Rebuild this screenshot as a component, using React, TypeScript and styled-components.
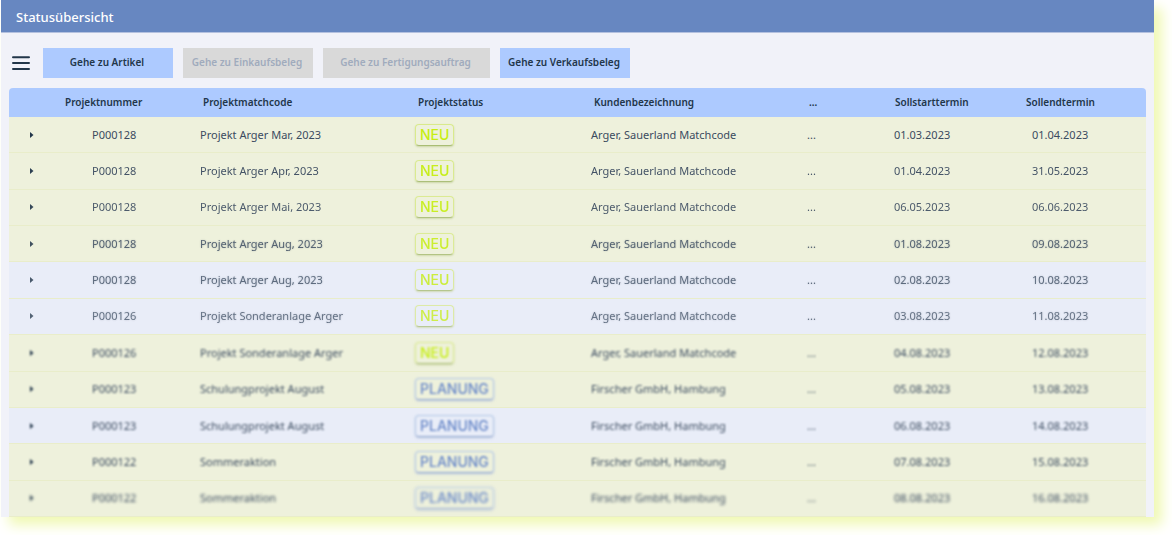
import React from 'react';
import styled, { createGlobalStyle } from 'styled-components';

const GlobalStyle = createGlobalStyle`
  * { box-sizing: border-box; }
  body {
    margin: 0;
    background: #ffffff;
    font-family: "Noto Sans", "Open Sans", sans-serif;
    color: #22364a;
  }
`;

const Page = styled.div`
  min-height: 100vh;
  padding: 0 18px 18px 1px;
  background: #ffffff;
`;

const Panel = styled.main`
  background: #f1f2f9;
  box-shadow: 8px 8px 12px #f0f9b4;
`;

const TitleBar = styled.header`
  display: flex;
  align-items: center;
  height: 33px;
  padding: 1px 15px 0;
  background: #6787c1;
  border-bottom: 1px solid #b4c1df;
`;

const Title = styled.h1`
  margin: 0;
  font-size: 13px;
  line-height: 18px;
  font-weight: 500;
  color: #ffffff;
`;

const Toolbar = styled.nav`
  display: flex;
  align-items: center;
  gap: 10px;
  padding: 15px 10px 10px;
`;

const MenuButton = styled.button`
  display: flex;
  margin-right: 2px;
  padding: 0;
  border: 0;
  background: none;
  color: #22364a;
`;

const ActionButton = styled.button<{ $wide?: boolean }>`
  width: ${({ $wide }) => ($wide ? 167 : 130)}px;
  height: 30px;
  padding: 0 2px 2px 0;
  border: 0;
  background: #adcaff;
  color: #22364a;
  font-family: inherit;
  font-size: 10px;
  line-height: 16px;
  font-weight: 600;
  white-space: nowrap;
  &:disabled {
    background: #d9d9d9;
    color: #a0abbd;
  }
`;

const TableArea = styled.section`
  padding: 0 8px;
`;

const Table = styled.table`
  width: 100%;
  height: 429px;
  table-layout: fixed;
  border-collapse: separate;
  border-spacing: 0;
  font-size: 11px;
  line-height: 16px;
`;

const HeadCell = styled.th<{ $indent?: number }>`
  height: 29px;
  padding: 0 0 2px ${({ $indent = 0 }) => $indent}px;
  background: #adcaff;
  text-align: left;
  font-size: 10px;
  font-weight: 600;
  white-space: nowrap;
  &:first-child { border-top-left-radius: 4px; }
  &:last-child { border-top-right-radius: 4px; }
`;

const Row = styled.tr<{ $blue: boolean }>`
  background: ${({ $blue }) => ($blue ? '#e9edf8' : '#eef1dc')};
`;

const Cell = styled.td<{ $indent?: number }>`
  padding: 0 0 0 ${({ $indent = 0 }) => $indent}px;
  border-bottom: 1px solid #e9edca;
  color: #3b4b60;
  white-space: nowrap;
`;

const FIRST_BLURRED = 6;

const blurFor = (level: number) =>
  level < FIRST_BLURRED ? 'none' : `blur(${(86 + (level - FIRST_BLURRED) * 15) / 100}px)`;

/* Rows lose focus progressively towards the end of the list. */
const Fade = styled.span<{ $level: number }>`
  display: block;
  filter: ${({ $level }) => blurFor($level)};
  text-shadow: ${({ $level }) =>
    $level > 2 && $level < FIRST_BLURRED ? '0 0 2px rgba(59, 75, 96, 0.4)' : 'none'};
  opacity: ${({ $level }) => ($level < FIRST_BLURRED ? 1 - $level / 20 : 1)};
`;

const ExpandButton = styled.button`
  display: block;
  margin: 0;
  padding: 0;
  border: 0;
  background: none;
  color: #22364a;
  svg { display: block; }
`;

const Badge = styled.span<{ $planned: boolean }>`
  display: inline-block;
  vertical-align: top;
  padding: 0 4px;
  border: 1px solid ${({ $planned }) => ($planned ? '#b3c8e6' : '#d9ea8c')};
  border-bottom-color: ${({ $planned }) => ($planned ? '#93a9d0' : '#a9bd74')};
  border-radius: 4px;
  box-shadow: 0 1px 2px ${({ $planned }) => ($planned ? '#b6c4dd' : '#cbd6a4')};
  color: ${({ $planned }) => ($planned ? '#6787c8' : '#c6ee12')};
  font-family: Inter, "Liberation Sans", sans-serif;
  font-size: 14px;
  line-height: 20px;
  font-weight: 500;
  text-shadow: none;
`;

const columns = [56, 135, 215, 176, 216, 87, 132, 120];

const heads: [string, number][] = [
  ['', 0],
  ['Projektnummer', 0],
  ['Projektmatchcode', 3],
  ['Projektstatus', 3],
  ['Kundenbezeichnung', 3],
  ['...', 2],
  ['Sollstarttermin', 1],
  ['Sollendtermin', 0],
];

interface Project {
  nr: string;
  name: string;
  planned?: boolean;
  start: string;
  end: string;
  blue?: boolean;
}

const projects: Project[] = [
  { nr: 'P000128', name: 'Projekt Arger Mar, 2023', start: '01.03.2023', end: '01.04.2023' },
  { nr: 'P000128', name: 'Projekt Arger Apr, 2023', start: '01.04.2023', end: '31.05.2023' },
  { nr: 'P000128', name: 'Projekt Arger Mai, 2023', start: '06.05.2023', end: '06.06.2023' },
  { nr: 'P000128', name: 'Projekt Arger Aug, 2023', start: '01.08.2023', end: '09.08.2023' },
  { nr: 'P000128', name: 'Projekt Arger Aug, 2023', start: '02.08.2023', end: '10.08.2023', blue: true },
  { nr: 'P000126', name: 'Projekt Sonderanlage Arger', start: '03.08.2023', end: '11.08.2023', blue: true },
  { nr: 'P000126', name: 'Projekt Sonderanlage Arger', start: '04.08.2023', end: '12.08.2023' },
  { nr: 'P000123', name: 'Schulungprojekt August', planned: true, start: '05.08.2023', end: '13.08.2023' },
  { nr: 'P000123', name: 'Schulungprojekt August', planned: true, start: '06.08.2023', end: '14.08.2023', blue: true },
  { nr: 'P000122', name: 'Sommeraktion', planned: true, start: '07.08.2023', end: '15.08.2023' },
  { nr: 'P000122', name: 'Sommeraktion', planned: true, start: '08.08.2023', end: '16.08.2023' },
];

export default function App() {
  return (
    <Page>
      <GlobalStyle />
      <Panel>
        <TitleBar>
          <Title>Statusübersicht</Title>
        </TitleBar>
        <Toolbar>
          <MenuButton type="button" aria-label="Menü">
            <svg width="20" height="14" viewBox="0 0 20 14" stroke="currentColor" strokeWidth="2" strokeLinecap="round">
              <path d="M2 1.2H18M2 7H18M2 13H18" />
            </svg>
          </MenuButton>
          <ActionButton type="button">Gehe zu Artikel</ActionButton>
          <ActionButton type="button" disabled>Gehe zu Einkaufsbeleg</ActionButton>
          <ActionButton type="button" disabled $wide>Gehe zu Fertigungsauftrag</ActionButton>
          <ActionButton type="button">Gehe zu Verkaufsbeleg</ActionButton>
        </Toolbar>
        <TableArea>
          <Table>
            <colgroup>
              {columns.map((width, i) => <col key={i} width={width} />)}
            </colgroup>
            <thead>
              <tr>
                {heads.map(([label, indent], i) => (
                  <HeadCell key={i} scope="col" $indent={indent}>{label}</HeadCell>
                ))}
              </tr>
            </thead>
            <tbody>
              {projects.map((p, i) => (
                <Row key={i} $blue={!!p.blue}>
                  <Cell $indent={20}>
                    <Fade $level={i}>
                      <ExpandButton type="button" aria-label="Aufklappen">
                        <svg width="6" height="6" viewBox="0 0 6 6" fill="currentColor">
                          <path d="M1 0L4.5 3L1 6Z" />
                        </svg>
                      </ExpandButton>
                    </Fade>
                  </Cell>
                  <Cell $indent={27}><Fade $level={i}>{p.nr}</Fade></Cell>
                  <Cell><Fade $level={i}>{p.name}</Fade></Cell>
                  <Cell>
                    <Fade $level={i}>
                      <Badge $planned={!!p.planned}>{p.planned ? 'PLANUNG' : 'NEU'}</Badge>
                    </Fade>
                  </Cell>
                  <Cell><Fade $level={i}>{p.planned ? 'Firscher GmbH, Hambung' : 'Arger, Sauerland Matchcode'}</Fade></Cell>
                  <Cell><Fade $level={i}>...</Fade></Cell>
                  <Cell><Fade $level={i}>{p.start}</Fade></Cell>
                  <Cell $indent={6}><Fade $level={i}>{p.end}</Fade></Cell>
                </Row>
              ))}
            </tbody>
          </Table>
        </TableArea>
      </Panel>
    </Page>
  );
}
